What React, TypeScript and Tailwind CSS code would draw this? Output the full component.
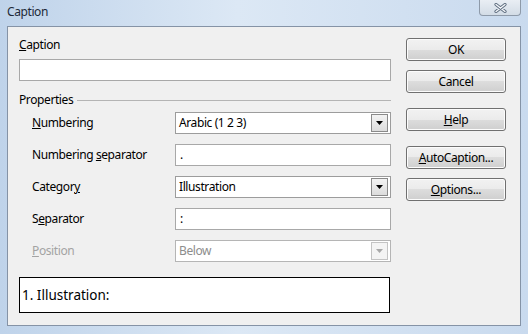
import React from 'react';

const font = "font-['Noto_Sans',sans-serif] tracking-[-0.4px]";

function Btn({ children }: { children: React.ReactNode }) {
  return (
    <div className="h-[23px] w-[100px] rounded-[3px] border border-[#707070] bg-[linear-gradient(#f2f2f2,#ebebeb_50%,#dddddd_50%,#cfcfcf)] shadow-[inset_0_0_0_1px_#fcfcfc] flex items-center justify-center text-[12px] text-black">
      {children}
    </div>
  );
}

function Combo({ value, disabled }: { value: string; disabled?: boolean }) {
  return (
    <div className={`h-[22px] w-[216px] border bg-white flex items-center pl-[3px] pr-[2px] ${disabled ? 'border-[#b5b5b5] text-[#8d8d8d]' : 'border-[#9c9c9c] text-black'}`}>
      <span className="flex-1 text-[12px]">{value}</span>
      <div className={`h-[18px] w-[17px] border flex items-center justify-center ${disabled ? 'border-[#c4c4c4] bg-[#f4f4f4]' : 'border-[#8a8a8a] bg-[linear-gradient(#f3f3f3,#dcdcdc)]'}`}>
        <svg width="7" height="4" viewBox="0 0 7 4">
          <path d="M0 0h7L3.5 4z" fill={disabled ? '#a8a8a8' : '#000'} />
        </svg>
      </div>
    </div>
  );
}

function Field({ value }: { value: string }) {
  return (
    <div className="h-[22px] w-[216px] border border-[#a8a8a8] bg-white flex items-center pl-[4px] text-[12px] text-black">
      {value}
    </div>
  );
}

function Row({ label, disabled, children }: { label: React.ReactNode; disabled?: boolean; children: React.ReactNode }) {
  return (
    <div className="flex items-center h-[22px] pl-[13px]">
      <span className={`w-[143px] text-[12px] ${disabled ? 'text-[#a3a3a3]' : 'text-black'}`}>{label}</span>
      {children}
    </div>
  );
}

export default function App() {
  return (
    <div className={`w-[528px] h-[334px] flex flex-col bg-[linear-gradient(90deg,#bfd3ea,#dce8f5_45%,#c9daee)] ${font}`}>
      {/* title bar */}
      <div className="h-[26px] flex items-start justify-between pl-[7px] pr-[7px]">
        <span className="mt-[3px] text-[12px] text-[#1e2a38]">Caption</span>
        <div className="h-[16px] w-[42px] rounded-b-[4px] border border-t-0 border-[#8e9aa9] bg-[linear-gradient(#e9eef4,#d3dce6)] flex items-center justify-center">
          <svg width="13" height="10" viewBox="0 0 13 10">
            <path d="M2 1.5l9 7M11 1.5l-9 7" stroke="#5f6e80" strokeWidth="3.2" strokeLinecap="round" />
            <path d="M2 1.5l9 7M11 1.5l-9 7" stroke="#f5f7fa" strokeWidth="1.3" strokeLinecap="round" />
          </svg>
        </div>
      </div>

      {/* client area */}
      <div className="mx-[7px] mb-[8px] flex-1 border border-[#8593a6] bg-[#f0f0f0] flex">
        <div className="pl-[11px] pt-[10px] w-[383px] flex flex-col">
          <span className="h-[16px] text-[12px] text-black leading-[16px]"><u>C</u>aption</span>
          <div className="mt-[6px] h-[22px] w-[372px] border border-[#a8a8a8] bg-white" />

          <div className="mt-[11px] h-[16px] flex items-center">
            <span className="text-[12px] text-black leading-[16px]">Properties</span>
            <div className="ml-[4px] flex-1 h-px bg-[#b4b4b4]" />
          </div>

          <div className="mt-[4px] flex flex-col gap-[10px]">
            <Row label={<><u>N</u>umbering</>}>
              <Combo value="Arabic (1 2 3)" />
            </Row>
            <Row label={<>Numbering <u>s</u>eparator</>}>
              <Field value="." />
            </Row>
            <Row label={<>Categor<u>y</u></>}>
              <Combo value="Illustration" />
            </Row>
            <Row label={<>S<u>e</u>parator</>}>
              <Field value=":" />
            </Row>
            <Row label={<><u>P</u>osition</>} disabled>
              <Combo value="Below" disabled />
            </Row>
          </div>

          <div className="mt-[15px] h-[36px] w-[371px] border border-black bg-white flex items-center pl-[2px] text-[13.5px] tracking-normal text-black">
            1. Illustration:
          </div>
        </div>

        <div className="ml-[15px] pt-[11px] flex flex-col">
          <Btn>OK</Btn>
          <div className="mt-[9px]"><Btn>Cancel</Btn></div>
          <div className="mt-[15px]"><Btn><u>H</u>elp</Btn></div>
          <div className="mt-[15px]"><Btn><u>A</u>utoCaption...</Btn></div>
          <div className="mt-[9px]"><Btn><u>O</u>ptions...</Btn></div>
        </div>
      </div>
    </div>
  );
}
